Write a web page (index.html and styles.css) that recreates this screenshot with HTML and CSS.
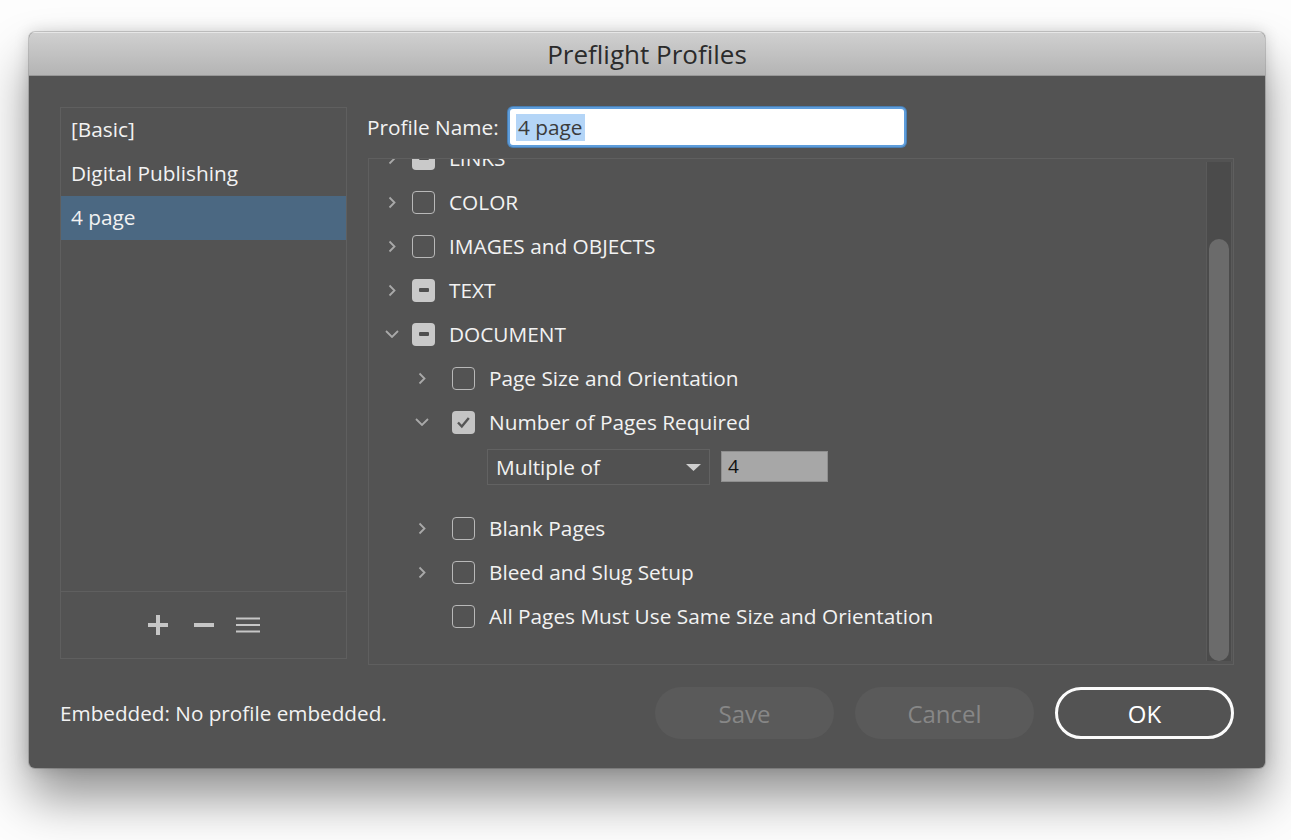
FILE: index.html
```html
<!DOCTYPE html>
<html lang="en">
<head>
  <meta charset="UTF-8">
  <title>Preflight Profiles</title>
  <link rel="stylesheet" href="styles.css">
</head>
<body>

<div class="window">
  <div class="titlebar">Preflight Profiles</div>

  <div class="content">
    <div class="main">
      <!-- profile list -->
      <div class="profiles">
        <ul class="profile-list">
          <li>[Basic]</li>
          <li>Digital Publishing</li>
          <li class="selected">4 page</li>
        </ul>
        <div class="list-tools">
          <svg class="tool-plus" width="20" height="20" viewBox="0 0 20 20"><path d="M10 0v20M0 10h20" stroke="#c6c6c6" stroke-width="4"/></svg>
          <svg class="tool-minus" width="20" height="20" viewBox="0 0 20 20"><path d="M0 10h20" stroke="#c6c6c6" stroke-width="4"/></svg>
          <svg class="tool-menu" width="24" height="16" viewBox="0 0 24 16"><path d="M0 1.5h24M0 8h24M0 14.5h24" stroke="#c6c6c6" stroke-width="2"/></svg>
        </div>
      </div>

      <!-- profile editor -->
      <div class="editor">
        <div class="name-row">
          <label class="name-label">Profile Name:</label>
          <div class="name-field"><span class="selection">4 page</span></div>
        </div>

        <div class="tree">
          <div class="tree-rows">
            <div class="row">
              <span class="chev"><svg width="8" height="13" viewBox="0 0 8 13"><path d="M1.5 1.5l5 5-5 5" fill="none" stroke="#a9a9a9" stroke-width="1.8"/></svg></span>
              <span class="box mixed"><i></i></span>
              <span class="label">LINKS</span>
            </div>
            <div class="row">
              <span class="chev"><svg width="8" height="13" viewBox="0 0 8 13"><path d="M1.5 1.5l5 5-5 5" fill="none" stroke="#a9a9a9" stroke-width="1.8"/></svg></span>
              <span class="box"></span>
              <span class="label">COLOR</span>
            </div>
            <div class="row">
              <span class="chev"><svg width="8" height="13" viewBox="0 0 8 13"><path d="M1.5 1.5l5 5-5 5" fill="none" stroke="#a9a9a9" stroke-width="1.8"/></svg></span>
              <span class="box"></span>
              <span class="label">IMAGES and OBJECTS</span>
            </div>
            <div class="row">
              <span class="chev"><svg width="8" height="13" viewBox="0 0 8 13"><path d="M1.5 1.5l5 5-5 5" fill="none" stroke="#a9a9a9" stroke-width="1.8"/></svg></span>
              <span class="box mixed"><i></i></span>
              <span class="label">TEXT</span>
            </div>
            <div class="row">
              <span class="chev"><svg width="14" height="8" viewBox="0 0 14 8"><path d="M1 1l6 6 6-6" fill="none" stroke="#a9a9a9" stroke-width="1.8"/></svg></span>
              <span class="box mixed"><i></i></span>
              <span class="label">DOCUMENT</span>
            </div>
            <div class="row sub">
              <span class="chev"><svg width="8" height="13" viewBox="0 0 8 13"><path d="M1.5 1.5l5 5-5 5" fill="none" stroke="#a9a9a9" stroke-width="1.8"/></svg></span>
              <span class="box"></span>
              <span class="label">Page Size and Orientation</span>
            </div>
            <div class="row sub">
              <span class="chev"><svg width="14" height="8" viewBox="0 0 14 8"><path d="M1 1l6 6 6-6" fill="none" stroke="#a9a9a9" stroke-width="1.8"/></svg></span>
              <span class="box checked"><svg width="23" height="23" viewBox="0 0 23 23"><path d="M6 11.5l3.8 4 7-8.5" fill="none" stroke="#555" stroke-width="2.4"/></svg></span>
              <span class="label">Number of Pages Required</span>
            </div>
            <div class="row options">
              <div class="select">
                <span>Multiple of</span>
                <svg width="15" height="7" viewBox="0 0 15 7"><path d="M0 0h15l-7.5 7z" fill="#cfcfcf"/></svg>
              </div>
              <div class="num">4</div>
            </div>
            <div class="row sub">
              <span class="chev"><svg width="8" height="13" viewBox="0 0 8 13"><path d="M1.5 1.5l5 5-5 5" fill="none" stroke="#a9a9a9" stroke-width="1.8"/></svg></span>
              <span class="box"></span>
              <span class="label">Blank Pages</span>
            </div>
            <div class="row sub">
              <span class="chev"><svg width="8" height="13" viewBox="0 0 8 13"><path d="M1.5 1.5l5 5-5 5" fill="none" stroke="#a9a9a9" stroke-width="1.8"/></svg></span>
              <span class="box"></span>
              <span class="label">Bleed and Slug Setup</span>
            </div>
            <div class="row sub">
              <span class="chev"></span>
              <span class="box"></span>
              <span class="label">All Pages Must Use Same Size and Orientation</span>
            </div>
          </div>
          <div class="scrollbar"><div class="thumb"></div></div>
        </div>
      </div>
    </div>

    <div class="footer">
      <div class="embedded">Embedded: No profile embedded.</div>
      <div class="buttons">
        <button class="btn disabled">Save</button>
        <button class="btn disabled">Cancel</button>
        <button class="btn primary">OK</button>
      </div>
    </div>
  </div>
</div>

</body>
</html>
```

FILE: styles.css
```css
html {
  background-color: #fdfdfd;
}

body {
  margin: 0;
  min-height: 840px;
  box-sizing: border-box;
  padding: 32px 0 0 29px;
  font-family: "Open Sans", "Noto Sans", sans-serif;
  color: #f2f2f2;
}

.window {
  width: 1236px;
  height: 736px;
  background-color: #535353;
  border-radius: 6px;
  overflow: hidden;
  box-shadow: 0 30px 50px rgba(0,0,0,0.42), 0 0 16px rgba(0,0,0,0.16), 0 0 0 1px rgba(0,0,0,0.16);
}

.titlebar {
  height: 43px;
  line-height: 45px;
  text-align: center;
  font-size: 26px;
  color: #2b2b2b;
  background: linear-gradient(#d0d0d0, #b4b4b4);
  border-bottom: 1px solid #979797;
  box-shadow: inset 0 1px 0 #e6e6e6;
}

.content {
  padding: 31px 31px 0 31px;
}

.main {
  display: flex;
  gap: 21px;
  height: 558px;
}

/* left list */

.profiles {
  width: 287px;
  height: 552px;
  box-sizing: border-box;
  border: 1px solid #5f5f5f;
  display: flex;
  flex-direction: column;
}

.profile-list {
  list-style: none;
  margin: 0;
  padding: 0;
  flex: 1;
}

.profile-list li {
  height: 44px;
  line-height: 43px;
  padding-left: 10px;
  font-size: 20.8px;
}

.profile-list li.selected {
  background-color: #4b6882;
}

.list-tools {
  height: 66px;
  border-top: 1px solid #5f5f5f;
  display: flex;
  align-items: center;
  justify-content: center;
}

.tool-minus { margin-left: 26px; }
.tool-menu { margin-left: 22px; }

/* right side */

.editor {
  flex: 1;
  display: flex;
  flex-direction: column;
}

.name-row {
  height: 40px;
  display: flex;
  align-items: center;
}

.name-label {
  width: 141px;
  margin-left: -1px;
  font-size: 20.8px;
}

.name-field {
  width: 398px;
  height: 40px;
  box-sizing: border-box;
  background-color: #fff;
  border: 2px solid #5e9ddb;
  border-radius: 5px;
  box-shadow: 0 0 0 1px #4a7fb3;
  padding: 0 0 0 6px;
  display: flex;
  align-items: center;
}

.selection {
  background-color: #b4d5f7;
  color: #3b3b3b;
  font-size: 20.8px;
  line-height: 27px;
  padding: 0 2px;
}

.tree {
  margin-top: 11px;
  height: 507px;
  box-sizing: border-box;
  border: 1px solid #5f5f5f;
  display: flex;
  overflow: hidden;
}

.tree-rows {
  flex: 1;
  margin-top: -23px;
}

.row {
  height: 44px;
  display: flex;
  align-items: center;
  padding-left: 13px;
}

.row.sub {
  padding-left: 43px;
}

.chev {
  width: 20px;
  height: 20px;
  display: flex;
  align-items: center;
  justify-content: center;
  margin-right: 10px;
}

.row.sub .chev {
  margin-right: 20px;
}

.box {
  width: 23px;
  height: 23px;
  box-sizing: border-box;
  border: 1.5px solid #b8b8b8;
  border-radius: 4px;
  margin-right: 14px;
  display: flex;
  align-items: center;
  justify-content: center;
}

.box.mixed {
  border: none;
  background-color: #c9c9c9;
}

.box.mixed i {
  width: 10px;
  height: 4px;
  border-radius: 1px;
  background-color: #4f4f4f;
}

.box.checked {
  border: none;
  background-color: #c4c4c4;
}

.label {
  font-size: 20.8px;
}

.row.options {
  height: 62px;
  align-items: flex-start;
  padding-left: 118px;
  padding-top: 5px;
  box-sizing: border-box;
}

.select {
  width: 223px;
  height: 36px;
  box-sizing: border-box;
  border: 1px solid #626262;
  background-color: #515151;
  display: flex;
  align-items: center;
  justify-content: space-between;
  padding: 0 8px 0 8px;
  font-size: 20.8px;
}

.num {
  width: 107px;
  height: 31px;
  margin: 2px 0 0 11px;
  box-sizing: border-box;
  background-color: #a7a7a7;
  border: 1px solid #8f8f8f;
  color: #111;
  font-size: 19px;
  line-height: 29px;
  padding-left: 6px;
}

.scrollbar {
  width: 24px;
  margin: 3px 1px 3px 0;
  background-color: #4b4b4b;
  border-left: 1px solid #5a5a5a;
  border-right: 1px solid #5a5a5a;
  display: flex;
  flex-direction: column;
}

.thumb {
  margin: auto 2px 0 2px;
  height: 422px;
  border-radius: 10px;
  background-color: #6b6b6b;
}

/* footer */

.footer {
  margin-top: 22px;
  display: flex;
  align-items: center;
  justify-content: space-between;
}

.embedded {
  font-size: 20.7px;
}

.buttons {
  display: flex;
  gap: 21px;
}

.btn {
  width: 179px;
  height: 52px;
  border-radius: 26px;
  font-family: "Open Sans", "Noto Sans", sans-serif;
  font-size: 24px;
  border: none;
  background-color: #5a5a5a;
  color: #878787;
}

.btn.primary {
  background-color: transparent;
  border: 3px solid #fbfbfb;
  color: #fff;
}
```
